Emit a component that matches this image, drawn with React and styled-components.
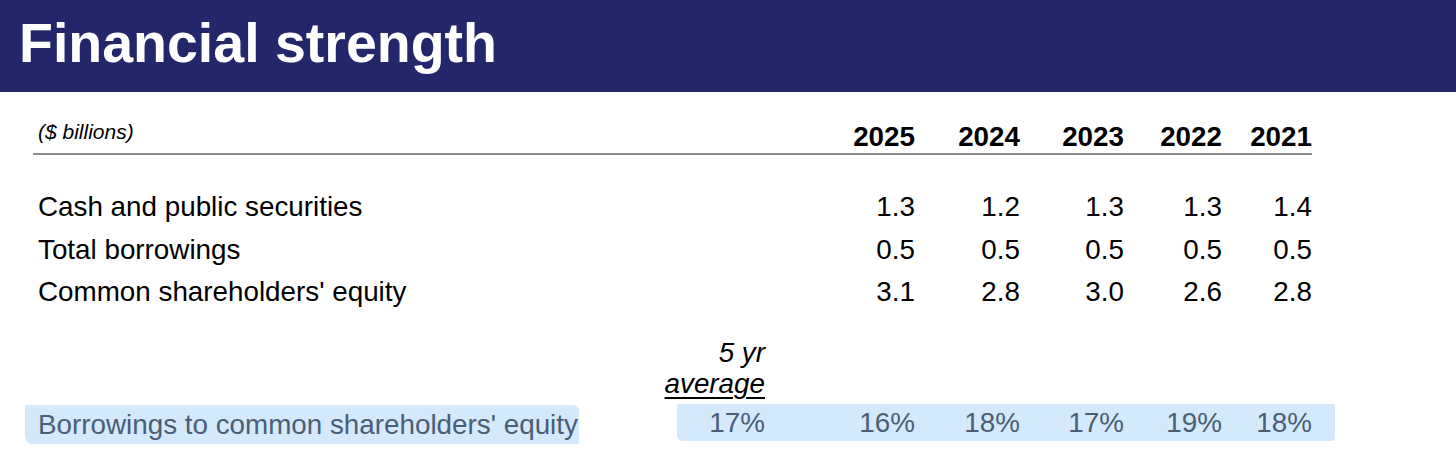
import styled, { createGlobalStyle } from "styled-components";

const GlobalStyle = createGlobalStyle`
  html, body {
    margin: 0;
    padding: 0;
    background: #ffffff;
  }
  body {
    font-family: "Liberation Sans", Arial, sans-serif;
    color: #000000;
  }
`;

const COLUMNS = "582px 150px 150px 105px 104px 98px 90px";

const Slide = styled.div`
  width: 1456px;
  height: 449px;
  overflow: hidden;
  background: #ffffff;
`;

const TitleBar = styled.header`
  height: 92px;
  background: #23266a;
  display: flex;
  align-items: center;
  padding-left: 19px;
`;

const Title = styled.h1`
  margin: 0;
  font-size: 55.5px;
  font-weight: 700;
  color: #ffffff;
  line-height: 1;
  padding-bottom: 4px;
`;

const Table = styled.div`
  margin-left: 33px;
  width: 1279px;
`;

const Row = styled.div`
  display: grid;
  grid-template-columns: ${COLUMNS};
  font-size: 27.8px;
  line-height: ${(p) => p.$lh || "42.5px"};
  margin-top: ${(p) => p.$top || "0px"};
`;

const HeadRow = styled(Row)`
  line-height: 32px;
  margin-top: 27.6px;
  border-bottom: 2px solid #8c8c8c;
  align-items: end;
`;

const Units = styled.div`
  padding-left: 5px;
  font-size: 21px;
  font-style: italic;
  line-height: 24px;
  padding-bottom: 9px;
`;

const Year = styled.div`
  font-weight: 700;
  text-align: right;
`;

const Label = styled.div`
  padding-left: 5px;
  white-space: nowrap;
`;

const Value = styled.div`
  text-align: right;
`;

const AvgHead = styled.div`
  grid-column: 2;
  text-align: right;
  font-style: italic;
  line-height: 31px;
`;

const Underlined = styled.span`
  text-decoration: underline;
  text-decoration-thickness: 1.5px;
  text-underline-offset: 4px;
`;

const MarkRow = styled(Row)`
  color: #4a5e76;
  line-height: 38px;
  margin-top: 6.6px;
`;

const Marker = styled.span`
  display: inline-block;
  background: #d4e9fc;
  margin-left: -13px;
  padding-left: 13px;
  padding-right: 1px;
  border-radius: 2px 6px 3px 8px;
  line-height: 39px;
`;

const MarkValues = styled.div`
  grid-column: 2 / -1;
  display: grid;
  grid-template-columns: 88px 150px 105px 104px 98px 90px;
  margin-left: 62px;
  margin-right: -23px;
  padding-right: 23px;
  background: #d4e9fc;
  border-radius: 3px 2px 4px 6px;
  line-height: 37px;
  margin-top: -1px;
  height: 37px;
`;

const years = ["2025", "2024", "2023", "2022", "2021"];

const rows = [
  { label: "Cash and public securities", values: ["1.3", "1.2", "1.3", "1.3", "1.4"] },
  { label: "Total borrowings", values: ["0.5", "0.5", "0.5", "0.5", "0.5"] },
  { label: "Common shareholders' equity", values: ["3.1", "2.8", "3.0", "2.6", "2.8"] },
];

const ratio = ["17%", "16%", "18%", "17%", "19%", "18%"];

export default function App() {
  return (
    <Slide>
      <GlobalStyle />
      <TitleBar>
        <Title>Financial strength</Title>
      </TitleBar>
      <Table>
        <HeadRow>
          <Units>($ billions)</Units>
          <div />
          {years.map((y) => (
            <Year key={y}>{y}</Year>
          ))}
        </HeadRow>
        <Row $top="31.6px">
          {rows.map((r) => (
            <>
              <Label key={r.label}>{r.label}</Label>
              <div />
              {r.values.map((v, i) => (
                <Value key={r.label + i}>{v}</Value>
              ))}
            </>
          ))}
        </Row>
        <Row $top="23px">
          <AvgHead>
            5 yr
            <br />
            <Underlined>average</Underlined>
          </AvgHead>
        </Row>
        <MarkRow>
          <Label>
            <Marker>Borrowings to common shareholders' equity</Marker>
          </Label>
          <MarkValues>
            {ratio.map((v, i) => (
              <Value key={i}>{v}</Value>
            ))}
          </MarkValues>
        </MarkRow>
      </Table>
    </Slide>
  );
}
